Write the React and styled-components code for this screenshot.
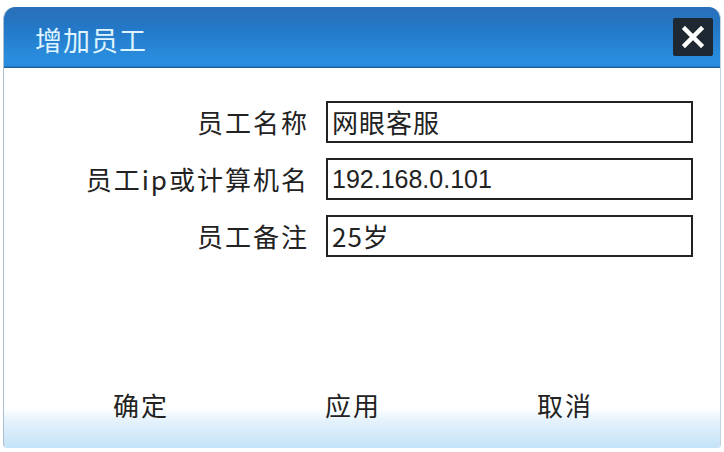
import { Fragment } from "react"
import styled, { createGlobalStyle } from "styled-components"

const GlobalStyle = createGlobalStyle`
  html, body {
    margin: 0;
    padding: 0;
    background: #ffffff;
  }
  body {
    font-family: "Noto Sans CJK SC", "Liberation Sans", sans-serif;
  }
`

const Dialog = styled.div`
  margin: 7px 2px 0 3px;
  width: 718px;
  height: 441px;
  display: flex;
  flex-direction: column;
  border-left: 1px solid #aebfd0;
  border-right: 1px solid #c4d2df;
  border-radius: 12px 12px 4px 4px;
  overflow: hidden;
  box-sizing: border-box;
  background: #fff;
`

const TitleBar = styled.div`
  height: 61px;
  flex-shrink: 0;
  display: flex;
  align-items: center;
  justify-content: space-between;
  padding: 0 7px 0 31px;
  box-sizing: border-box;
  background: linear-gradient(to bottom, #2a6fb8 0%, #2478c8 35%, #2a8fe0 90%, #2a8cdc 96%, #1c568f 100%);
`

const Title = styled.span`
  color: #def4ff;
  font-size: 27px;
  line-height: 1;
  padding-top: 4px;
  letter-spacing: 1px;
`

const CloseButton = styled.div`
  width: 40px;
  height: 38px;
  margin-top: -2px;
  background: #1e2833;
  border-radius: 2px;
  display: flex;
  align-items: center;
  justify-content: center;
`

const Body = styled.div`
  flex: 1;
  display: flex;
  flex-direction: column;
`

const Form = styled.div`
  display: grid;
  grid-template-columns: 305px 367px;
  column-gap: 17px;
  row-gap: 15px;
  padding-top: 33px;
  align-items: center;
`

const Label = styled.div`
  text-align: right;
  font-size: 26px;
  color: #222;
  letter-spacing: 2px;
  line-height: 1;
  white-space: nowrap;
`

const Field = styled.div`
  height: 42px;
  border: 2px solid #222;
  box-sizing: border-box;
  display: flex;
  align-items: center;
  padding-left: 4px;
  font-size: ${p => (p.$latin ? "25px" : "26px")};
  letter-spacing: ${p => (p.$latin ? "0" : "1px")};
  font-family: ${p => (p.$latin ? `"Liberation Sans", "Noto Sans CJK SC", sans-serif` : `"Noto Sans CJK SC", sans-serif`)};
  color: #222;
  line-height: 1;
`

const Footer = styled.div`
  margin-top: auto;
  height: 73px;
  display: flex;
  gap: 156px;
  padding: 17px 0 0 109px;
  box-sizing: border-box;
  background: linear-gradient(to bottom, #ffffff 0%, #ffffff 45%, #e2f1fb 65%, #c4e3f8 100%);
`

const FooterButton = styled.span`
  font-size: 26px;
  color: #222;
  letter-spacing: 2px;
  line-height: 1;
  cursor: pointer;
`

const App = () => {
  const rows = [
    { label: "员工名称", value: "网眼客服" },
    { label: "员工ip或计算机名", value: "192.168.0.101", latin: true },
    { label: "员工备注", value: "25岁" },
  ]

  return (
    <>
      <GlobalStyle />
      <Dialog>
        <TitleBar>
          <Title>增加员工</Title>
          <CloseButton>
            <svg width="24" height="24" viewBox="0 0 24 24">
              <path d="M4 4 L20 20 M20 4 L4 20" stroke="#fff" strokeWidth="4.5" strokeLinecap="square" />
            </svg>
          </CloseButton>
        </TitleBar>
        <Body>
          <Form>
            {rows.map(r => (
              <Fragment key={r.label}>
                <Label>{r.label}</Label>
                <Field $latin={r.latin}>{r.value}</Field>
              </Fragment>
            ))}
          </Form>
          <Footer>
            <FooterButton>确定</FooterButton>
            <FooterButton>应用</FooterButton>
            <FooterButton>取消</FooterButton>
          </Footer>
        </Body>
      </Dialog>
    </>
  )
}

export default App
